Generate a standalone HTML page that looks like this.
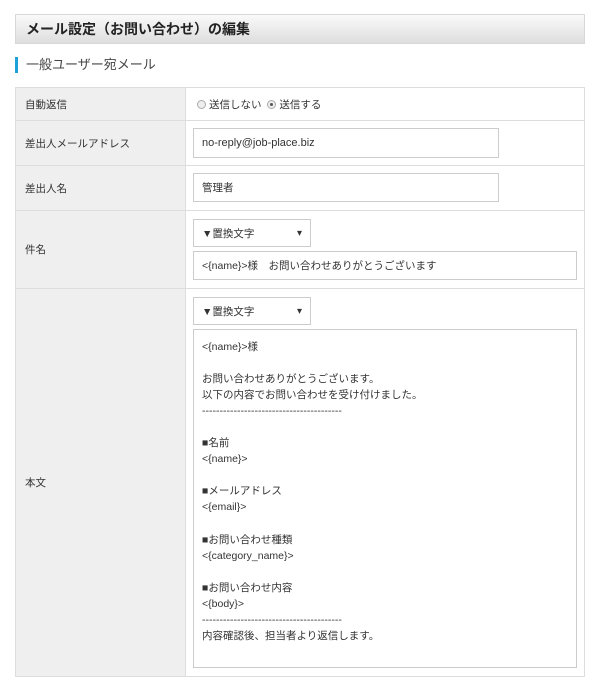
<!DOCTYPE html>
<html><head><meta charset="utf-8"><style>
*{box-sizing:border-box;margin:0;padding:0}
body{width:600px;height:684px;background:#fff;font-family:"Liberation Sans","Noto Sans CJK JP",sans-serif;color:#333;font-size:10.5px;position:relative;overflow:hidden}
.hd{position:absolute;left:15px;top:14px;width:570px;height:30px;background:linear-gradient(#fafafa,#dedede);border:1px solid #d8d8d8;font-weight:bold;font-size:14px;line-height:28px;padding-left:10px;color:#222}
.sec{position:absolute;left:15px;top:57px;font-size:13px;line-height:16px;padding-left:8px;border-left:3px solid #1ea0d8;color:#444}
table{position:absolute;left:15px;top:87px;width:570px;border-collapse:collapse}
td{border:1px solid #ddd;vertical-align:middle}
td.l{width:170px;background:#efefef;padding-left:9px}
td.r{padding-left:8px}
.box{position:absolute;border:1px solid #ccc;background:#fff;padding-left:8px;line-height:28px}
.sel{width:118px;height:28px}
.sel:after{content:"▾";position:absolute;right:8px;top:0;font-size:10px}
.rad{display:inline-block;width:9px;height:9px;border:1px solid #aaa;border-radius:50%;background:#eee;vertical-align:-1px;margin-right:3px;position:relative}
.rad.on:after{content:"";position:absolute;left:2px;top:2px;width:3px;height:3px;border-radius:50%;background:#555}
.ta{position:absolute;left:193px;top:329px;width:384px;height:339px;border:1px solid #ccc;padding:9px 8px;line-height:16.05px;white-space:pre;font-size:10.5px}
.en{font-size:11px}
</style></head><body>
<div class="hd">メール設定（お問い合わせ）の編集</div>
<div class="sec">一般ユーザー宛メール</div>
<table>
<tr style="height:33px"><td class="l">自動返信</td><td class="r" style="padding-left:11px"><span class="rad"></span>送信しない&nbsp; <span class="rad on"></span>送信する</td></tr>
<tr style="height:45px"><td class="l">差出人メールアドレス</td><td></td></tr>
<tr style="height:45px"><td class="l">差出人名</td><td></td></tr>
<tr style="height:78px"><td class="l">件名</td><td></td></tr>
<tr style="height:388px"><td class="l">本文</td><td></td></tr>
</table>
<div class="box en" style="left:193px;top:128px;width:306px;height:30px">no-reply@job-place.biz</div>
<div class="box" style="left:193px;top:173px;width:306px;height:29px">管理者</div>
<div class="box sel" style="left:193px;top:219px">▼置換文字</div>
<div class="box" style="left:193px;top:251px;width:384px;height:29px">&lt;{name}&gt;様　お問い合わせありがとうございます</div>
<div class="box sel" style="left:193px;top:297px">▼置換文字</div>
<div class="ta">&lt;{name}&gt;様

お問い合わせありがとうございます。
以下の内容でお問い合わせを受け付けました。
----------------------------------------

■名前
&lt;{name}&gt;

■メールアドレス
&lt;{email}&gt;

■お問い合わせ種類
&lt;{category_name}&gt;

■お問い合わせ内容
&lt;{body}&gt;
----------------------------------------
内容確認後、担当者より返信します。</div>
</body></html>
